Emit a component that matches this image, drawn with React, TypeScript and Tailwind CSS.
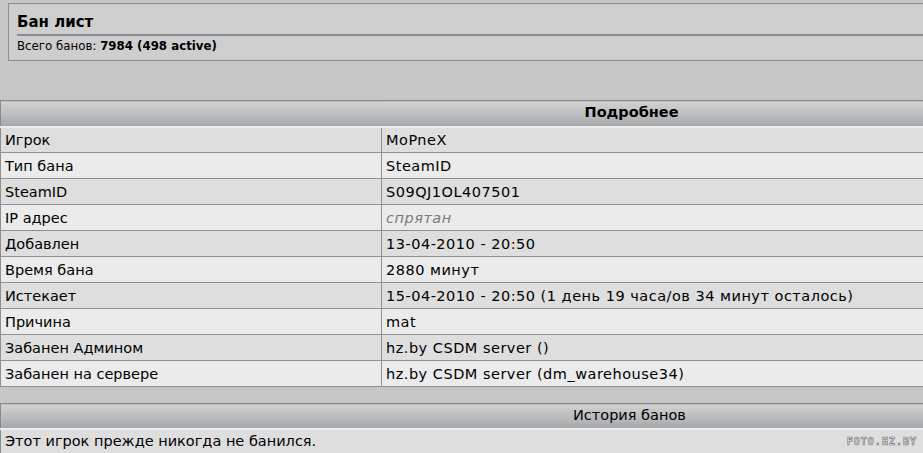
const rows: [string, React.ReactNode][] = [
  ["Игрок", "MoPneX"],
  ["Тип бана", "SteamID"],
  ["SteamID", "S09QJ1OL407501"],
  ["IP адрес", <i className="text-[#7a7a7a]">спрятан</i>],
  ["Добавлен", "13-04-2010 - 20:50"],
  ["Время бана", "2880 минут"],
  ["Истекает", "15-04-2010 - 20:50 (1 день 19 часа/ов 34 минут осталось)"],
  ["Причина", "mat"],
  ["Забанен Админом", "hz.by CSDM server ()"],
  ["Забанен на сервере", "hz.by CSDM server (dm_warehouse34)"],
];

export default function App() {
  return (
    <div className="w-[923px] h-[453px] overflow-hidden bg-[#c6c6c6] text-[14.5px] text-black relative font-['DejaVu_Sans',Verdana,sans-serif]">
      <div className="w-[1268px]">
        <div className="mx-2 mt-[3px] border border-[#8e8e8e] bg-[#cecece] px-2 pt-[9px] pb-[6px]">
          <h1 className="text-[15px] font-bold leading-[19px]">Бан лист</h1>
          <div className="h-[2px] bg-[#878b93] mt-[2px]" />
          <div className="text-[11.8px] leading-[15px] mt-[3px]">
            Всего банов: <b>7984 (498 active)</b>
          </div>
        </div>

        <table className="mt-[39px] w-full border-collapse border border-[#8a8a8a]">
          <thead>
            <tr>
              <th className="w-[381px] h-[26px] bg-gradient-to-b from-[#d2d2d2] to-[#a5a8ac] border-b-2 border-[#ececec]"></th>
              <th className="h-[26px] bg-gradient-to-b from-[#d2d2d2] to-[#a5a8ac] border-b-2 border-[#ececec] text-left pl-[203px] font-bold text-[14.5px]">
                Подробнее
              </th>
            </tr>
          </thead>
          <tbody>
            {rows.map(([k, v], i) => (
              <tr key={k} className={i % 2 === 0 ? "bg-[#dedede]" : "bg-[#ebebeb]"}>
                <td className="h-[26px] px-[4px] border border-[#8f8f8f] leading-[16px]">{k}</td>
                <td className="h-[26px] px-[4px] border border-[#8f8f8f] leading-[16px] tracking-[0.5px]">{v}</td>
              </tr>
            ))}
          </tbody>
        </table>

        <table className="mt-[16px] w-full border-collapse border border-[#8a8a8a]">
          <thead>
            <tr>
              <th className="h-[25px] bg-gradient-to-b from-[#d2d2d2] to-[#a5a8ac] border-b-2 border-[#ececec] font-normal text-left pl-[572px] text-[14.5px]">
                История банов
              </th>
            </tr>
          </thead>
          <tbody>
            <tr className="bg-[#dedede]">
              <td className="h-[25px] px-[4px] leading-[16px]">Этот игрок прежде никогда не банился.</td>
            </tr>
          </tbody>
        </table>
      </div>
      <div className="absolute right-[6px] bottom-[6px] text-[10px] font-bold tracking-[1px] text-[#e8e8e8] leading-none [-webkit-text-stroke:0.6px_#6e6e6e] font-['DejaVu_Sans_Mono',monospace]">
        FOTO.HZ.BY
      </div>
    </div>
  );
}
